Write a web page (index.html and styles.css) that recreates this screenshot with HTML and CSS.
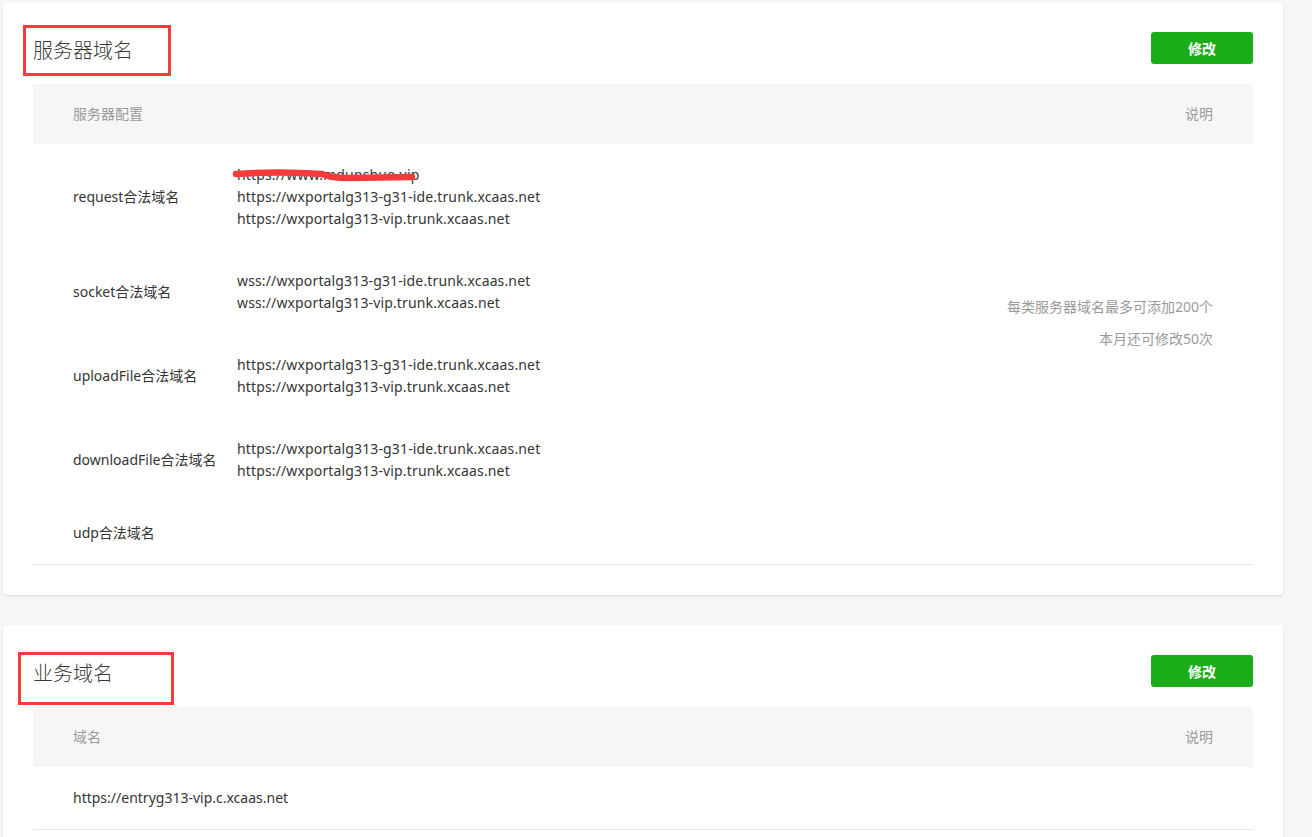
FILE: index.html
```html
<!DOCTYPE html>
<html lang="zh-CN">
<head>
<meta charset="utf-8">
<title>开发设置</title>
<link rel="stylesheet" href="styles.css">
</head>
<body>
<div class="page">
  <section class="card">
    <div class="mark mark-1"></div>
    <div class="card-head">
      <h2 class="card-title">服务器域名</h2>
      <button class="btn">修改</button>
    </div>
    <div class="table">
      <div class="thead">
        <div class="th">服务器配置</div>
        <div class="th th-right">说明</div>
      </div>
      <div class="tbody">
        <div class="rows">
          <div class="row">
            <div class="label">request合法域名</div>
            <div class="values">
              <div class="scribbled">https://www.mdunshuo.vip<svg class="scribble" width="190" height="16" viewBox="0 0 190 16"><path d="M4 7 Q45 4 90 7 Q100 11 115 11 L180 10" fill="none" stroke="#f43a3a" stroke-width="6.5" stroke-linecap="round"/></svg></div>
              <div>https://wxportalg313-g31-ide.trunk.xcaas.net</div>
              <div>https://wxportalg313-vip.trunk.xcaas.net</div>
            </div>
          </div>
          <div class="row">
            <div class="label">socket合法域名</div>
            <div class="values">
              <div>wss://wxportalg313-g31-ide.trunk.xcaas.net</div>
              <div>wss://wxportalg313-vip.trunk.xcaas.net</div>
            </div>
          </div>
          <div class="row">
            <div class="label">uploadFile合法域名</div>
            <div class="values">
              <div>https://wxportalg313-g31-ide.trunk.xcaas.net</div>
              <div>https://wxportalg313-vip.trunk.xcaas.net</div>
            </div>
          </div>
          <div class="row">
            <div class="label">downloadFile合法域名</div>
            <div class="values">
              <div>https://wxportalg313-g31-ide.trunk.xcaas.net</div>
              <div>https://wxportalg313-vip.trunk.xcaas.net</div>
            </div>
          </div>
          <div class="row">
            <div class="label">udp合法域名</div>
            <div class="values"></div>
          </div>
        </div>
        <div class="notes">
          <div>每类服务器域名最多可添加200个</div>
          <div>本月还可修改50次</div>
        </div>
      </div>
    </div>
  </section>

  <section class="card">
    <div class="mark mark-2"></div>
    <div class="card-head">
      <h2 class="card-title">业务域名</h2>
      <button class="btn">修改</button>
    </div>
    <div class="table">
      <div class="thead">
        <div class="th">域名</div>
        <div class="th th-right">说明</div>
      </div>
      <div class="tbody">
        <div class="rows">
          <div class="row">
            <div class="label">https://entryg313-vip.c.xcaas.net</div>
          </div>
        </div>
      </div>
    </div>
  </section>
</div>
</body>
</html>
```

FILE: styles.css
```css
html, body {
  margin: 0;
  padding: 0;
  background: #f6f6f6;
}
body {
  font-family: "Noto Sans", "Noto Sans CJK SC", sans-serif;
  font-size: 14px;
  color: #353535;
}
.page {
  width: 1280px;
  padding: 2px 0 0 3px;
  display: flex;
  flex-direction: column;
  gap: 30px;
}
.card {
  position: relative;
  background: #fff;
  border-radius: 4px;
  box-shadow: 0 1px 2px rgba(0,0,0,0.12);
  padding: 30px 30px 30px;
}
.mark {
  position: absolute;
  border: 3px solid #f43a3a;
  box-sizing: border-box;
}
.mark-1 { left: 20px; top: 23px; width: 148px; height: 51px; }
.mark-2 { left: 15px; top: 27px; width: 156px; height: 53px; }
.card-head {
  display: flex;
  align-items: center;
  justify-content: space-between;
  height: 32px;
  margin-bottom: 20px;
}
.card-title {
  margin: 0;
  font-size: 20px;
  font-weight: 300;
  color: #3a3a3a;
  line-height: 32px;
  position: relative;
  top: 3px;
}
.btn {
  width: 102px;
  height: 32px;
  border: 0;
  border-radius: 3px;
  background: #1aad19;
  color: #fff;
  font-family: inherit;
  font-size: 14px;
  font-weight: bold;
  padding: 0;
}
.table {
  border-bottom: 1px solid #e7e7eb;
}
.thead {
  display: flex;
  justify-content: space-between;
  align-items: center;
  height: 60px;
  background: #f6f6f6;
  padding: 0 40px;
  color: #9a9a9a;
}
.th {
  position: relative;
  top: -1px;
}
.tbody {
  display: flex;
  justify-content: space-between;
}
.row {
  display: flex;
  align-items: center;
  padding: 20px 0;
  line-height: 22px;
}
.label {
  width: 164px;
  padding-left: 40px;
  white-space: nowrap;
}
.values {
  min-height: 22px;
  letter-spacing: 0.14px;
}
.scribbled {
  position: relative;
}
.scribble {
  position: absolute;
  left: -5px;
  top: 3px;
}
.notes {
  padding: 147px 40px 0 0;
  text-align: right;
  color: #9a9a9a;
  line-height: 32px;
}
```
